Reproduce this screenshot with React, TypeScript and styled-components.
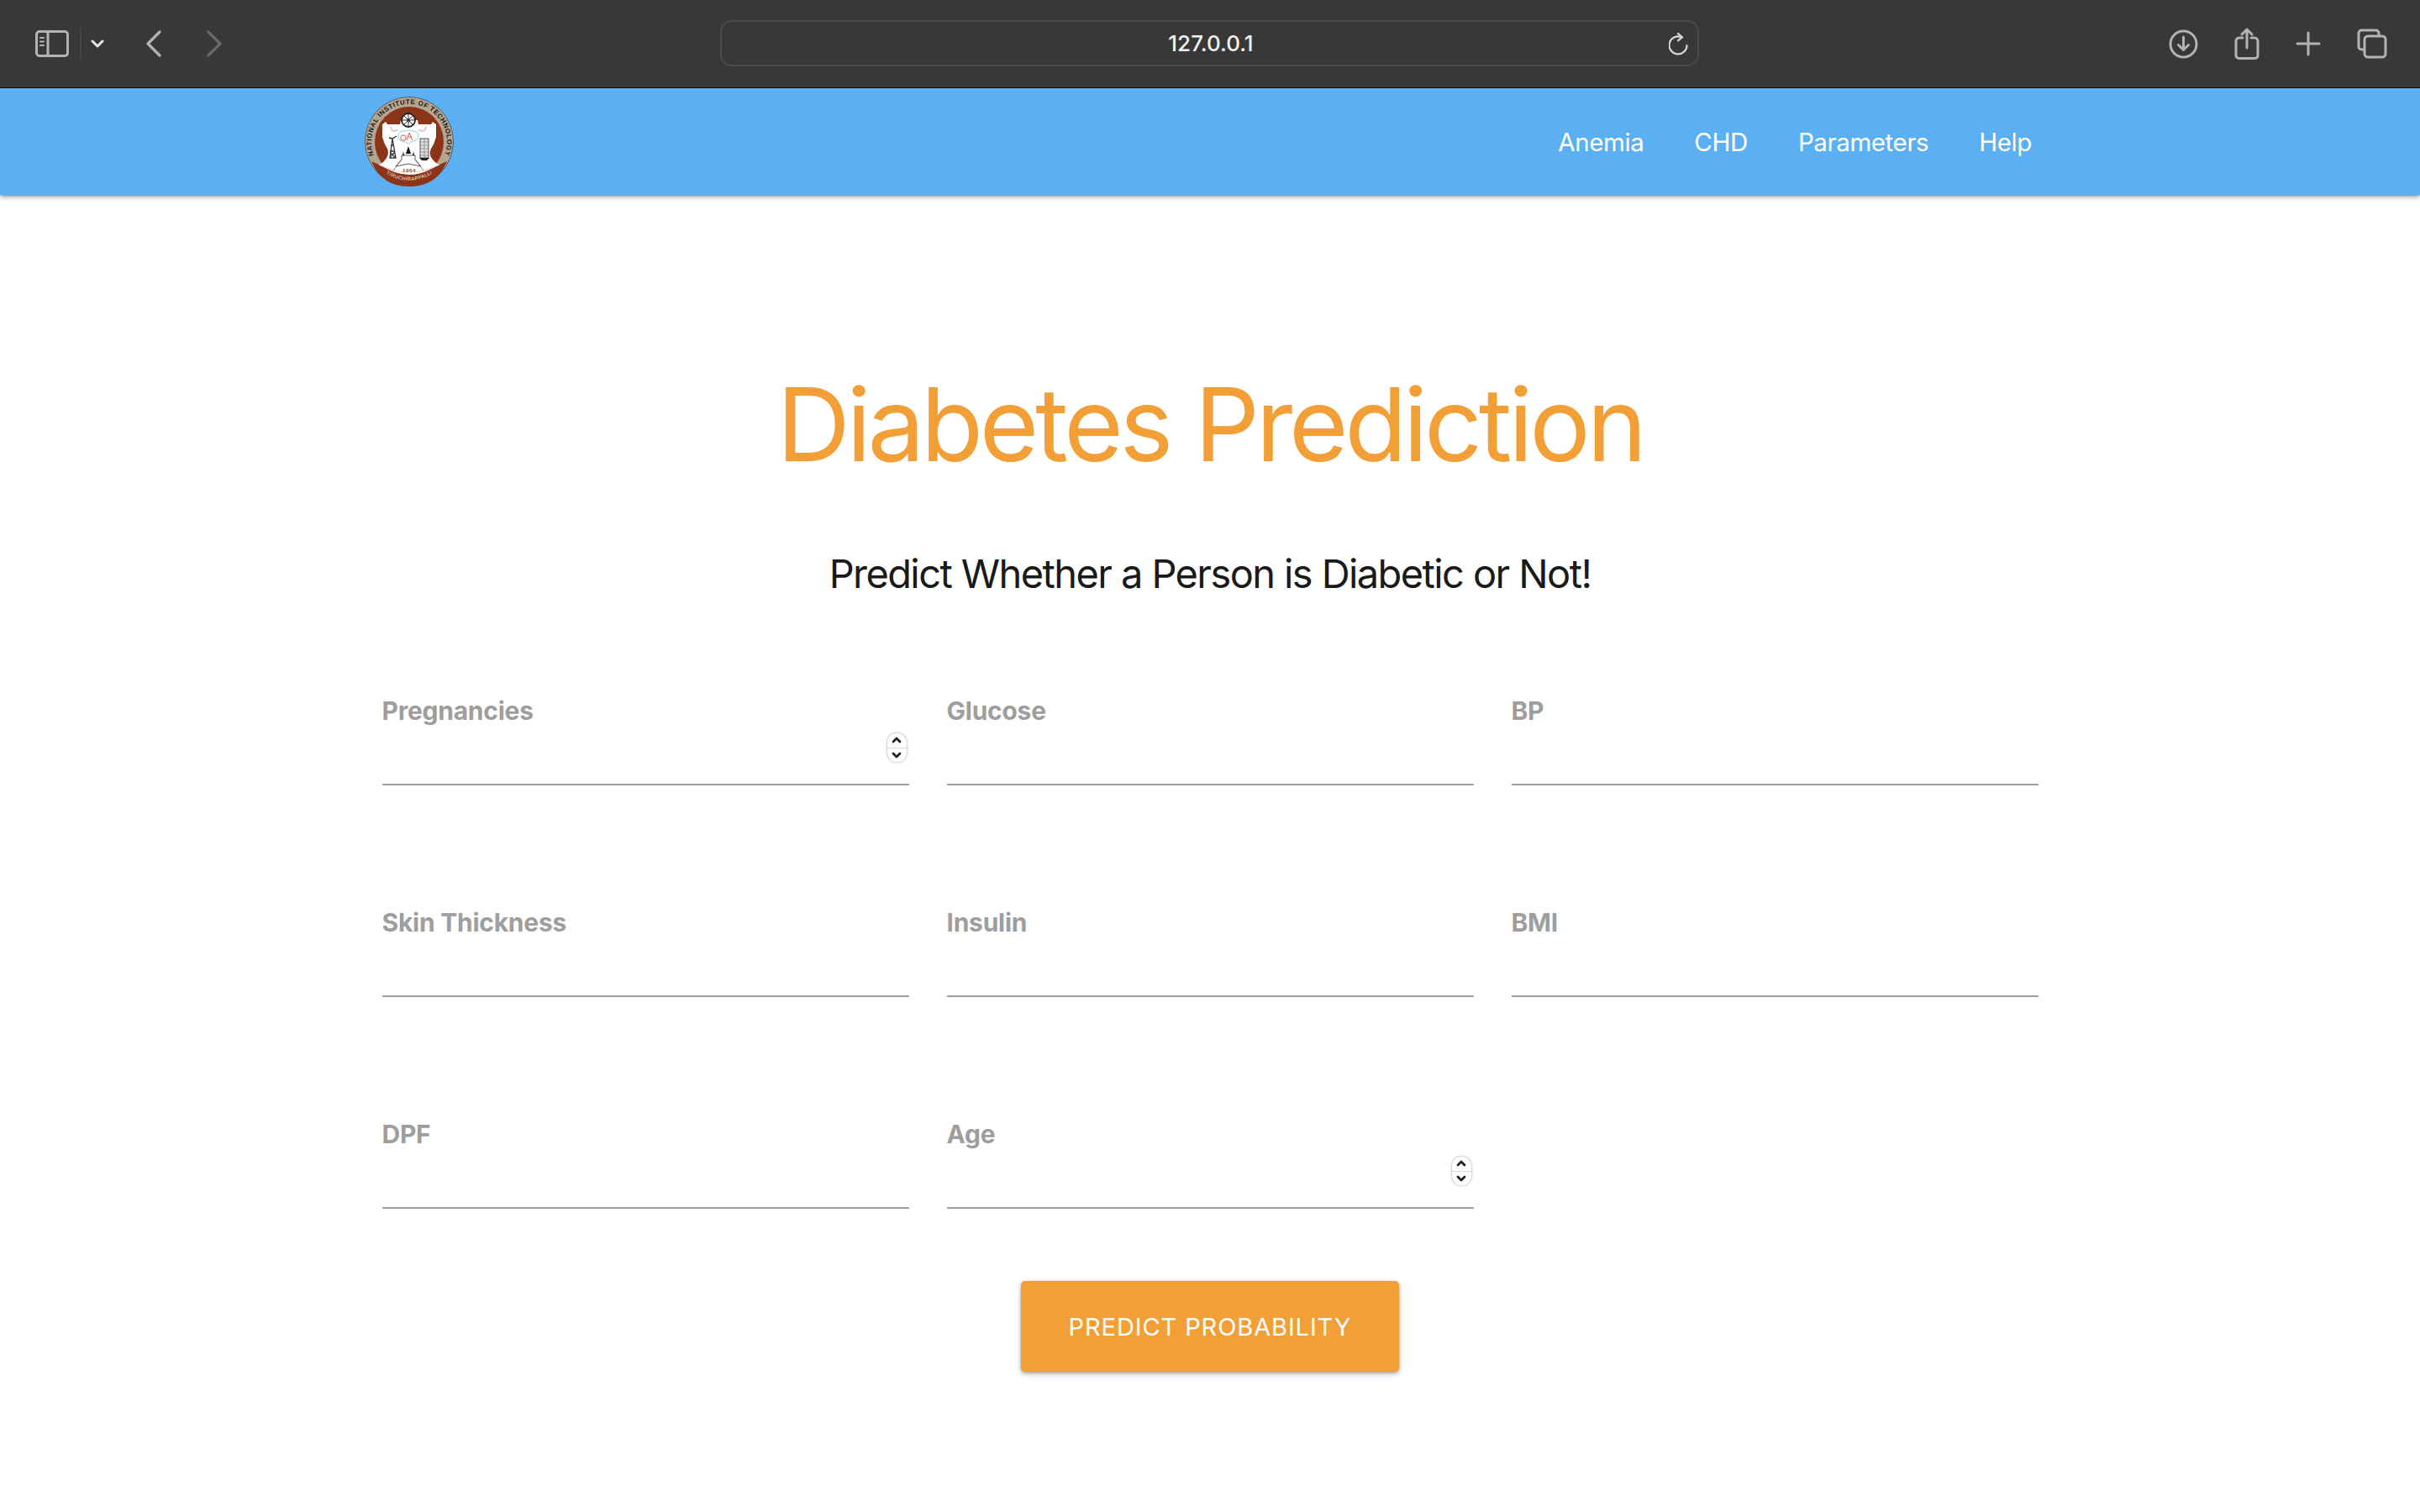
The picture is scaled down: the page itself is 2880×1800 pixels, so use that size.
import React from 'react';
import styled, {createGlobalStyle} from 'styled-components';

const GlobalStyle = createGlobalStyle`
	html, body {
		margin: 0;
		padding: 0;
		background: #fff;
	}
	* {
		box-sizing: border-box;
	}
`;

const Page = styled.div`
	width: 2880px;
	height: 1800px;
	overflow: hidden;
	font-family: Inter, 'Liberation Sans', sans-serif;
	display: flex;
	flex-direction: column;
`;

const Toolbar = styled.div`
	height: 105px;
	flex: none;
	background: #383836;
	border-bottom: 1px solid #0c0c0c;
	display: grid;
	grid-template-columns: 857px 1165px 1fr;
	align-items: center;
`;

const ToolGroupLeft = styled.div`
	display: flex;
	align-items: center;
	padding-left: 42px;
`;

const ToolGroupRight = styled.div`
	display: flex;
	align-items: center;
	justify-content: flex-end;
	padding-right: 39px;
	gap: 43px;
`;

const Icon = styled.svg<{$ml?: number}>`
	display: block;
	flex: none;
	margin-left: ${(p) => p.$ml ?? 0}px;
	fill: none;
	stroke: #b3b3b1;
	stroke-width: 3;
	stroke-linecap: round;
	stroke-linejoin: round;
`;

const UrlBar = styled.div`
	height: 55px;
	margin-top: -2px;
	padding: 1px 0 0 3px;
	border: 2px solid #4b4b49;
	border-radius: 14px;
	position: relative;
	display: flex;
	align-items: center;
	justify-content: center;
	color: #f1f1f1;
	font-size: 26px;
	font-weight: 500;
`;

const Reload = styled.svg`
	position: absolute;
	right: 10px;
	top: 13px;
	fill: none;
	stroke: #d8d8d8;
	stroke-width: 2.2;
	stroke-linecap: round;
	stroke-linejoin: round;
`;

const Nav = styled.nav`
	height: 127px;
	flex: none;
	background: #5ab0f2;
	box-shadow: 0 3px 6px rgba(0, 0, 0, 0.3), 0 1px 2px rgba(0, 0, 0, 0.25);
	display: flex;
	align-items: center;
	padding: 0 462px 0 434px;
	position: relative;
`;

const NavLinks = styled.div`
	margin-left: auto;
	display: flex;
	gap: 60px;
`;

const NavLink = styled.a`
	color: #fff;
	font-size: 29.5px;
	line-height: 40px;
	letter-spacing: -0.4px;
`;

const Main = styled.main`
	flex: 1;
	display: flex;
	flex-direction: column;
	align-items: center;
`;

const Title = styled.h1`
	margin: 200px 0 0;
	color: #f29f38;
	font-size: 121px;
	line-height: 146px;
	font-weight: 400;
	letter-spacing: -4.3px;
`;

const Subtitle = styled.h2`
	margin: 75px 0 0;
	color: #1a1a1a;
	font-size: 47px;
	line-height: 60px;
	font-weight: 400;
	letter-spacing: -1.6px;
`;

const Form = styled.form`
	margin-top: 115px;
	display: grid;
	grid-template-columns: repeat(3, 627px);
	column-gap: 45px;
	row-gap: 145px;
`;

const Field = styled.div`
	height: 107px;
	border-bottom: 2px solid #9e9e9e;
	position: relative;
`;

const Label = styled.label`
	display: block;
	margin-top: -2px;
	color: #9e9e9e;
	font-size: 30px;
	line-height: 40px;
	font-weight: 700;
	letter-spacing: -0.25px;
`;

const Spinner = styled.div`
	position: absolute;
	right: 3px;
	top: 45px;
	width: 23px;
	height: 34px;
	border-radius: 11px;
	background: #fff;
	box-shadow: 0 0 3px rgba(0, 0, 0, 0.4);
	display: flex;
	flex-direction: column;
`;

const SpinnerHalf = styled.div<{$top?: boolean}>`
	flex: 1;
	display: flex;
	align-items: center;
	justify-content: center;
	border-bottom: ${(p) => (p.$top ? '1px solid #d8d8d8' : 'none')};
`;

const SpinnerArrow = styled.svg`
	fill: none;
	stroke: #222;
	stroke-width: 2.8;
	stroke-linecap: round;
	stroke-linejoin: round;
`;

const PredictButton = styled.button`
	margin-top: 86px;
	width: 450px;
	height: 108px;
	border: none;
	border-radius: 5px;
	background: #f29f38;
	color: #fff;
	font-family: inherit;
	font-size: 29px;
	letter-spacing: 0.9px;
	box-shadow: 0 3px 6px rgba(0, 0, 0, 0.25), 0 1px 3px rgba(0, 0, 0, 0.2);
`;

const Logo = () => (
	<svg width={106} height={107} viewBox="0 0 106 107">
		<defs>
			<path id="arcTop" d="M15 78 A45 45 0 1 1 91 78" />
			<path id="arcBottom" d="M23 90 Q53 110 83 90" />
		</defs>
		<ellipse cx={53} cy={53.5} rx={52.5} ry={53} fill="#b5a48f" stroke="#5c5c5c" strokeWidth={1} />
		<ellipse cx={53} cy={54} rx={41} ry={42} fill="#8c3418" />
		<path d="M8 77 L15 80 Q53 100 91 80 L98 77 Q86 107 53 107 Q20 107 8 77Z" fill="#8c3418" />
		<text fontFamily="Liberation Sans, sans-serif" fontSize={8} fontWeight={700} fill="#1a1a1a" letterSpacing={0.55}>
			<textPath href="#arcTop" startOffset="50%" textAnchor="middle">
				NATIONAL INSTITUTE OF TECHNOLOGY
			</textPath>
		</text>
		<text fontFamily="Liberation Sans, sans-serif" fontSize={6} fill="#f5ebe0" letterSpacing={0.4}>
			<textPath href="#arcBottom" startOffset="50%" textAnchor="middle">
				TIRUCHIRAPPALLI
			</textPath>
		</text>
		<path
			d="M21 33 L25 30 L27 33 L42 33 L43 28 L63 28 L64 33 L79 33 L81 30 L85 33 L85 48 Q83 56 79 62 Q74 72 88 81 Q70 93 53 93 Q36 93 18 81 Q31 72 27 62 Q23 56 21 48Z"
			fill="#fff"
		/>
		<path d="M17 81 Q53 99 89 81" fill="none" stroke="#ead9cc" strokeWidth={1.1} />
		<circle cx={52} cy={28} r={8} fill="#fff" stroke="#222" strokeWidth={1.8} />
		<circle cx={52} cy={28} r={1.7} fill="#222" />
		<path d="M52 20V36M44 28H60M46.400 22.400L57.600 33.600M57.600 22.400L46.400 33.600" stroke="#222" strokeWidth={0.9} />
		<path d="M31 36q1 6 5 5l4-1.500M73 36q-1 6-5 5l-4-1.500" fill="none" stroke="#d88aa0" strokeWidth={1} />
		<path d="M40 47q-1-6 6-6 6-2 12 0 7 1 6 7-2 5-6 5-3 0-5 3-2 1-4-2-3-1-6-1-3-2-3-6Z" fill="#fff" stroke="#7bbde0" strokeWidth={0.8} />
		<circle cx={46} cy={49} r={3.200} fill="none" stroke="#c9553a" strokeWidth={0.9} />
		<path d="M50 52l3-9 4 9M52 48h4" fill="none" stroke="#c9553a" strokeWidth={0.9} />
		<path d="M29 49l4 1 5-3M33 50l-3 23h7l-4-23M31 58h4M30 65h6M30 72l6-6M36 72l-6-6" fill="none" stroke="#333" strokeWidth={1.3} />
		<rect x={66} y={50} width={10} height={23} fill="#ddd" stroke="#444" strokeWidth={0.9} />
		<path d="M66 54h10M66 58h10M66 62h10M66 66h10M66 70h10M71 50v23" stroke="#777" strokeWidth={0.6} />
		<path d="M65 73h12l-3 3h-6z" fill="#222" />
		<path d="M52 59l3 9h-6zM46 65l1 5h-2zM58 65l1 5h-2z" fill="#111" />
		<path d="M44 70h16v5l7 8-15-3-15 3 7-8z" fill="#fff" stroke="#333" strokeWidth={0.8} />
		<path d="M34 88l10-13M70 88L60 75" stroke="#555" strokeWidth={0.7} />
		<text x={53} y={90} textAnchor="middle" fontFamily="Liberation Sans, sans-serif" fontSize={6.2} fontWeight={700} fill="#a8452a" letterSpacing={0.5}>
			1964
		</text>
	</svg>
);

type FieldDef = {label: string; spinner?: boolean};

const fields: FieldDef[] = [
	{label: 'Pregnancies', spinner: true},
	{label: 'Glucose'},
	{label: 'BP'},
	{label: 'Skin Thickness'},
	{label: 'Insulin'},
	{label: 'BMI'},
	{label: 'DPF'},
	{label: 'Age', spinner: true},
];

const navItems = ['Anemia', 'CHD', 'Parameters', 'Help'];

const App = () => {
	return (
		<Page>
			<GlobalStyle />
			<Toolbar>
				<ToolGroupLeft>
					<Icon width={40} height={32} viewBox="0 0 40 32">
						<rect x={1.5} y={1.5} width={37} height={29} rx={3.5} />
						<path d="M15 2V30" />
						<path d="M6 9h4M6 13.5h4M6 18h4" strokeWidth={2} />
					</Icon>
					<Icon width={2} height={36} viewBox="0 0 2 36" $ml={13} style={{stroke: '#4c4c4a'}}>
						<path d="M1 0V36" strokeWidth={1.5} />
					</Icon>
					<Icon width={16} height={12} viewBox="0 0 16 12" $ml={11} style={{stroke: '#e6e6e6'}}>
						<path d="M2 3l6 6 6-6" strokeWidth={3} />
					</Icon>
					<Icon width={20} height={32} viewBox="0 0 20 32" $ml={49}>
						<path d="M17 2L3 16l14 14" strokeWidth={3.2} />
					</Icon>
					<Icon width={20} height={32} viewBox="0 0 20 32" $ml={52} style={{stroke: '#6a6a68'}}>
						<path d="M3 2l14 14L3 30" strokeWidth={3.2} />
					</Icon>
				</ToolGroupLeft>
				<UrlBar>
					127.0.0.1
					<Reload width={24} height={28} viewBox="0 0 24 28">
						<path d="M15 5.2A10.5 10.5 0 1 0 21.5 15" />
						<path d="M11 1l5 4.3-5 4" />
					</Reload>
				</UrlBar>
				<ToolGroupRight>
					<Icon width={35} height={35} viewBox="0 0 35 35">
						<circle cx={17.5} cy={17.5} r={15.5} />
						<path d="M17.5 9v15M11.5 18.5l6 6 6-6" />
					</Icon>
					<Icon width={30} height={38} viewBox="0 0 30 38">
						<path d="M10 12H6a4 4 0 0 0-4 4v17a3.500 3.500 0 0 0 3.500 3.500h19A3.500 3.500 0 0 0 28 33V16a4 4 0 0 0-4-4h-4" />
						<path d="M15 24V2M9 8l6-6 6 6" />
					</Icon>
					<Icon width={30} height={30} viewBox="0 0 30 30">
						<path d="M15 2v26M2 15h26" />
					</Icon>
					<Icon width={36} height={36} viewBox="0 0 36 36">
						<path d="M8 25H5.500A3.500 3.500 0 0 1 2 21.500V5.500A3.500 3.500 0 0 1 5.500 2h17A3.500 3.500 0 0 1 26 5.500V9" />
						<rect x={9} y={9} width={25} height={25} rx={4} />
					</Icon>
				</ToolGroupRight>
			</Toolbar>
			<Nav>
				<Logo />
				<NavLinks>
					{navItems.map((item) => (
						<NavLink key={item}>{item}</NavLink>
					))}
				</NavLinks>
			</Nav>
			<Main>
				<Title>Diabetes Prediction</Title>
				<Subtitle>Predict Whether a Person is Diabetic or Not!</Subtitle>
				<Form>
					{fields.map((field) => (
						<Field key={field.label}>
							<Label>{field.label}</Label>
							{field.spinner ? (
								<Spinner>
									<SpinnerHalf $top>
										<SpinnerArrow width={12} height={8} viewBox="0 0 12 8">
											<path d="M2 6l4-4 4 4" />
										</SpinnerArrow>
									</SpinnerHalf>
									<SpinnerHalf>
										<SpinnerArrow width={12} height={8} viewBox="0 0 12 8">
											<path d="M2 2l4 4 4-4" />
										</SpinnerArrow>
									</SpinnerHalf>
								</Spinner>
							) : null}
						</Field>
					))}
				</Form>
				<PredictButton type="button">PREDICT PROBABILITY</PredictButton>
			</Main>
		</Page>
	);
};

export default App;
